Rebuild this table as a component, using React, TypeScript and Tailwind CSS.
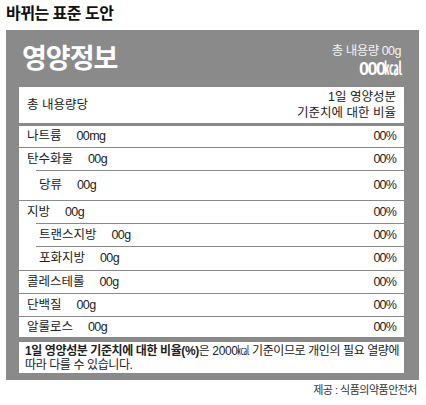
import React from "react";

type Row = {
  label: string;
  amount: string;
  indent?: boolean;
  h: string;
  line?: "full" | "indent" | "none";
};

const rows: Row[] = [
  { label: "나트륨", amount: "00mg", h: "h-[21px]", line: "full" },
  { label: "탄수화물", amount: "00g", h: "h-[22px]", line: "indent" },
  { label: "당류", amount: "00g", indent: true, h: "h-[29px]", line: "full" },
  { label: "지방", amount: "00g", h: "h-[22px]", line: "indent" },
  { label: "트랜스지방", amount: "00g", indent: true, h: "h-[22px]", line: "indent" },
  { label: "포화지방", amount: "00g", indent: true, h: "h-[23px]", line: "full" },
  { label: "콜레스테롤", amount: "00g", h: "h-[22px]", line: "full" },
  { label: "단백질", amount: "00g", h: "h-[22px]", line: "full" },
  { label: "알룰로스", amount: "00g", h: "h-[20px]", line: "none" },
];

const NutritionRow: React.FC<{ row: Row }> = ({ row }) => {
  return (
    <>
      <div
        className={`${row.h} flex items-center justify-between pr-[8px] text-[12.5px] text-[#222] ${
          row.indent ? "pl-[20px]" : "pl-[8px]"
        }`}
      >
        <span>
          {row.label}
          <span className="ml-[15px] tracking-[-0.6px]">{row.amount}</span>
        </span>
        <span className="tracking-[-0.8px]">00%</span>
      </div>
      {row.line === "full" && <div className="h-px bg-[#8a8a8a]" />}
      {row.line === "indent" && <div className="h-px ml-[17px] bg-[#8a8a8a]" />}
    </>
  );
};

export default function App() {
  return (
    <div
      className="w-[426px] h-[405px] bg-white"
      style={{ fontFamily: '"Liberation Sans", "Noto Sans CJK KR", sans-serif' }}
    >
      <div className="h-[30px] pl-[6px] pt-[5px] text-[16px] font-bold leading-[18px] tracking-[-0.5px] text-[#111]">
        바뀌는 표준 도안
      </div>

      <div className="ml-[6px] w-[413px] bg-[#8a8a8a] pb-[7px]">
        {/* top heading */}
        <div className="h-[57px] flex justify-between items-start pl-[16px] pr-[18px] pt-[13px]">
          <div className="text-[27px] font-bold leading-[32px] text-white tracking-[-1px]">
            영양정보
          </div>
          <div className="flex flex-col items-end text-[#f2f2f2]">
            <span className="text-[12.5px] leading-[16px] tracking-[-0.5px]">총 내용량 00g</span>
            <span className="text-[18px] font-bold leading-[20px] tracking-[-1.5px] text-white">
              000㎉
            </span>
          </div>
        </div>

        {/* table */}
        <div className="ml-[13px] mr-[15px] bg-white">
          <div className="h-[36px] flex items-center justify-between pl-[8px] pr-[8px] text-[12.5px] text-[#222]">
            <span>총 내용량당</span>
            <span className="text-right leading-[16px]">
              1일 영양성분
              <br />
              기준치에 대한 비율
            </span>
          </div>
          <div className="h-[3px] bg-[#8a8a8a]" />
          {rows.map((row) => (
            <NutritionRow key={row.label} row={row} />
          ))}
        </div>

        {/* footnote */}
        <div className="mt-[5px] ml-[13px] mr-[15px] h-[31px] bg-white pl-[6px] pt-[2px] text-[12px] leading-[14px] tracking-[-0.4px] text-[#222]">
          <span className="font-bold">1일 영양성분 기준치에 대한 비율(%)</span>은 2000㎉ 기준이므로 개인의 필요 열량에
          <br />
          따라 다를 수 있습니다.
        </div>
      </div>

      <div className="pr-[9px] pt-[2px] text-right text-[11px] leading-[16px] tracking-[-0.5px] text-[#333]">
        제공 : 식품의약품안전처
      </div>
    </div>
  );
}
